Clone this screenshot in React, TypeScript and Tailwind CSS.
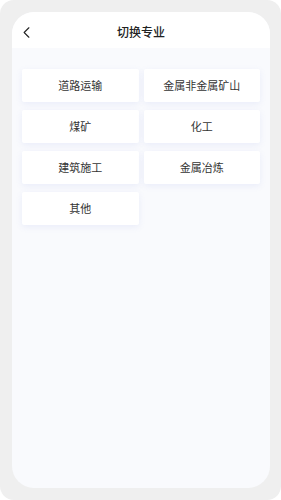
import { ChevronLeft } from "lucide-react"

const majors = ["道路运输", "金属非金属矿山", "煤矿", "化工", "建筑施工", "金属冶炼", "其他"]

export default function App() {
  return (
    <div
      className="w-[281px] h-[500px] bg-white"
      style={{ fontFamily: '"Noto Sans CJK SC", "Noto Sans", sans-serif' }}
    >
      <div className="w-full h-full bg-[#efefef] rounded-[14px] p-[12px] pr-[11px]">
        <div className="w-full h-full rounded-[22px] overflow-hidden bg-[#f9fafd] flex flex-col">
          <div className="h-[36px] bg-white flex items-center relative shrink-0">
            <ChevronLeft className="absolute left-[5px] top-[11px] w-[19px] h-[19px] text-[#222]" strokeWidth={1.4} />
            <div className="flex-1 text-center text-[12px] font-medium text-[#222] pt-[4px]">切换专业</div>
          </div>
          <div className="grid grid-cols-2 gap-x-[5px] gap-y-[8px] pt-[21px] px-[10px] pr-[10px]">
            {majors.map((m) => (
              <div
                key={m}
                className="h-[33px] bg-white rounded-[2px] flex items-center justify-center text-[11px] text-[#333] shadow-[0_2px_6px_rgba(120,140,220,0.12)]"
              >
                {m}
              </div>
            ))}
          </div>
        </div>
      </div>
    </div>
  )
}
